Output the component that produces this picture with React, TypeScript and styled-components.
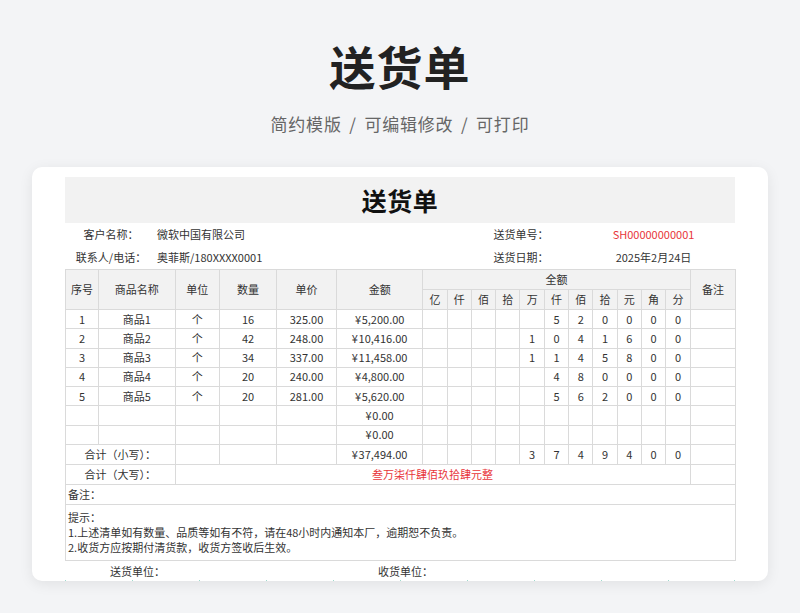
import React from "react";
import styled, { createGlobalStyle } from "styled-components";

const Global = createGlobalStyle`
  html, body { margin: 0; padding: 0; }
  body {
    background: #f3f4f6;
    font-family: "Noto Sans CJK SC", "Noto Sans", sans-serif;
    color: #333;
  }
`;

const Page = styled.div`
  width: 800px;
  height: 613px;
  overflow: hidden;
  padding-top: 42px;
  box-sizing: border-box;
  display: flex;
  flex-direction: column;
  align-items: center;
`;

const Heading = styled.h1`
  margin: 0;
  font-size: 46px;
  line-height: 46px;
  font-weight: 700;
  color: #222;
  letter-spacing: 1px;
`;

const Sub = styled.div`
  margin-top: 23.5px;
  font-size: 17px;
  line-height: 24px;
  color: #666;
  letter-spacing: 0.8px;
  word-spacing: 3px;
`;

const Card = styled.div`
  margin-top: 31.5px;
  width: 736px;
  height: 414px;
  background: #fff;
  border-radius: 10px;
  box-shadow: 0 3px 14px rgba(0, 0, 0, 0.08);
  overflow: hidden;
  padding: 10px 33px 0;
  box-sizing: border-box;
  font-size: 11px;
  color: #333;
`;

const TitleBar = styled.div`
  height: 45.5px;
  background: #f2f2f2;
  display: flex;
  align-items: center;
  justify-content: center;
  font-size: 25px;
  font-weight: 700;
  color: #111;
  letter-spacing: 0.5px;
`;

const InfoGrid = styled.div`
  display: grid;
  grid-template-columns: 92px 313px 102px 163px;
  grid-auto-rows: 23.25px;
  align-items: center;
`;

const InfoCell = styled.div<{ $align?: "left" | "center"; $red?: boolean }>`
  text-align: ${(p) => p.$align ?? "center"};
  color: ${(p) => (p.$red ? "#e8353a" : "#333")};
  white-space: nowrap;
`;

const Table = styled.table`
  width: 670px;
  table-layout: fixed;
  border-collapse: collapse;
  font-size: 11px;
  color: #333;
`;

const Row = styled.tr<{ $h: number }>`
  height: ${(p) => p.$h}px;
`;

const Th = styled.th`
  background: #f2f2f2;
  border: 1px solid #dadada;
  font-weight: 400;
  padding: 0;
  text-align: center;
  vertical-align: middle;
  line-height: 1.2;
`;

const Td = styled.td<{ $align?: "left" | "center"; $red?: boolean; $top?: boolean }>`
  border: 1px solid #dadada;
  padding: ${(p) => (p.$align === "left" ? "0 2px" : "0")};
  text-align: ${(p) => p.$align ?? "center"};
  vertical-align: ${(p) => (p.$top ? "top" : "middle")};
  color: ${(p) => (p.$red ? "#e8353a" : "#333")};
  line-height: 1.2;
  white-space: nowrap;
`;

const Notes = styled.div`
  padding-top: 5px;
  line-height: 15px;
  white-space: normal;
`;

const Footer = styled.div`
  display: grid;
  grid-template-columns: repeat(5, 134px);
  height: 19px;
  align-items: center;
`;

const FooterCell = styled.div`
  text-align: center;
  padding-left: 11px;
`;

const Ticks = styled.div`
  display: grid;
  grid-template-columns: repeat(10, 67px);
  height: 12px;
  border-right: 1px solid #9fd9cc;
`;

const Tick = styled.div`
  border-left: 1px solid #9fd9cc;
`;

const DIGIT_HEAD = ["亿", "仟", "佰", "拾", "万", "仟", "佰", "拾", "元", "角", "分"];

type Item = { no?: number; name?: string; unit?: string; qty?: number; price?: number; amount: number };

const items: Item[] = [
  { no: 1, name: "商品1", unit: "个", qty: 16, price: 325 },
  { no: 2, name: "商品2", unit: "个", qty: 42, price: 248 },
  { no: 3, name: "商品3", unit: "个", qty: 34, price: 337 },
  { no: 4, name: "商品4", unit: "个", qty: 20, price: 240 },
  { no: 5, name: "商品5", unit: "个", qty: 20, price: 281 },
  {},
  {},
].map((r: any) => ({ ...r, amount: r.qty && r.price ? r.qty * r.price : 0 }));

const total = items.reduce((s, r) => s + r.amount, 0);

const money = (v: number) =>
  "¥\u200A" + v.toLocaleString("en-US", { minimumFractionDigits: 2, maximumFractionDigits: 2 });

const digits = (v: number): string[] => {
  if (!v) return Array(11).fill("");
  const s = Math.round(v * 100).toString();
  const pad = Array(11 - s.length).fill("");
  return [...pad, ...s.split("")];
};

const colWidths = [33, 76.5, 44.5, 57, 60, 86.3, ...Array(11).fill(24.3), 45.4];

export default function App() {
  return (
    <>
      <Global />
      <Page>
        <Heading>送货单</Heading>
        <Sub>简约模版 / 可编辑修改 / 可打印</Sub>
        <Card>
          <TitleBar>送货单</TitleBar>
          <InfoGrid>
            <InfoCell>客户名称：</InfoCell>
            <InfoCell $align="left">微软中国有限公司</InfoCell>
            <InfoCell>送货单号：</InfoCell>
            <InfoCell $red>SH00000000001</InfoCell>
            <InfoCell>联系人/电话：</InfoCell>
            <InfoCell $align="left">奥菲斯/180XXXX0001</InfoCell>
            <InfoCell>送货日期：</InfoCell>
            <InfoCell>2025年2月24日</InfoCell>
          </InfoGrid>
          <Table>
            <colgroup>
              {colWidths.map((w, i) => (
                <col key={i} style={{ width: w }} />
              ))}
            </colgroup>
            <thead>
              <Row $h={20}>
                <Th rowSpan={2}>序号</Th>
                <Th rowSpan={2}>商品名称</Th>
                <Th rowSpan={2}>单位</Th>
                <Th rowSpan={2}>数量</Th>
                <Th rowSpan={2}>单价</Th>
                <Th rowSpan={2}>金额</Th>
                <Th colSpan={11}>全额</Th>
                <Th rowSpan={2}>备注</Th>
              </Row>
              <Row $h={20}>
                {DIGIT_HEAD.map((d, i) => (
                  <Th key={i}>{d}</Th>
                ))}
              </Row>
            </thead>
            <tbody>
              {items.map((r, i) => (
                <Row $h={19.25} key={i}>
                  <Td>{r.no ?? ""}</Td>
                  <Td>{r.name ?? ""}</Td>
                  <Td>{r.unit ?? ""}</Td>
                  <Td>{r.qty ?? ""}</Td>
                  <Td>{r.price !== undefined ? r.price.toFixed(2) : ""}</Td>
                  <Td>{money(r.amount)}</Td>
                  {digits(r.amount).map((d, j) => (
                    <Td key={j}>{d}</Td>
                  ))}
                  <Td />
                </Row>
              ))}
              <Row $h={20}>
                <Td colSpan={2}>合计（小写）：</Td>
                <Td />
                <Td />
                <Td />
                <Td>{money(total)}</Td>
                {digits(total).map((d, j) => (
                  <Td key={j}>{d}</Td>
                ))}
                <Td />
              </Row>
              <Row $h={20.5}>
                <Td colSpan={2}>合计（大写）：</Td>
                <Td colSpan={15} $red>
                  叁万柒仟肆佰玖拾肆元整
                </Td>
                <Td />
              </Row>
              <Row $h={20}>
                <Td colSpan={18} $align="left">
                  备注：
                </Td>
              </Row>
              <Row $h={56}>
                <Td colSpan={18} $align="left" $top>
                  <Notes>
                    提示：
                    <br />
                    1.上述清单如有数量、品质等如有不符，请在48小时内通知本厂，逾期恕不负责。
                    <br />
                    2.收货方应按期付清货款，收货方签收后生效。
                  </Notes>
                </Td>
              </Row>
            </tbody>
          </Table>
          <Footer>
            <FooterCell>送货单位：</FooterCell>
            <FooterCell />
            <FooterCell>收货单位：</FooterCell>
            <FooterCell />
            <FooterCell />
          </Footer>
          <Ticks>
            {Array.from({ length: 10 }).map((_, i) => (
              <Tick key={i} />
            ))}
          </Ticks>
        </Card>
      </Page>
    </>
  );
}
